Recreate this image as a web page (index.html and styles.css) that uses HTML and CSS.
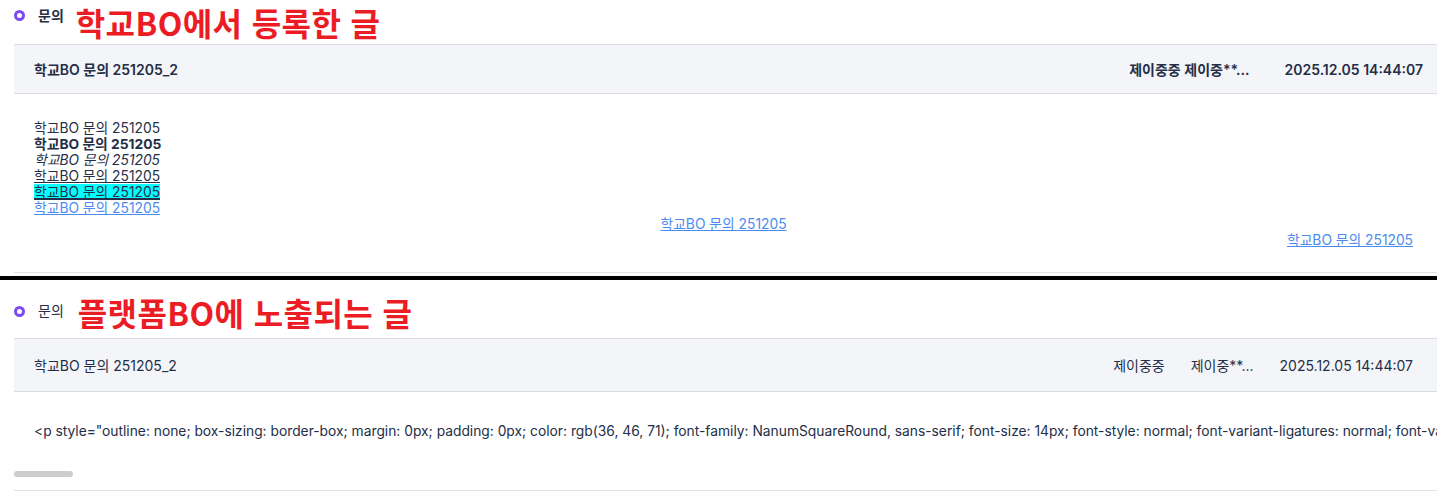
FILE: index.html
```html
<!DOCTYPE html>
<html lang="ko">
<head>
  <meta charset="UTF-8" />
  <meta name="viewport" content="width=device-width, initial-scale=1.0" />
  <title>문의</title>
  <link rel="stylesheet" href="styles.css">
</head>
<body>

<!-- 학교BO 쪽 -->
<section class="board board-school">
  <div class="board-title">
    <span class="dot"></span>
    <span class="label bold">문의</span>
    <span class="note">학교BO에서 등록한 글</span>
  </div>
  <div class="row-head head-school">
    <div class="subject">학교BO 문의 251205_2</div>
    <div class="writer">제이중중 제이중**...</div>
    <div class="date">2025.12.05 14:44:07</div>
  </div>
  <div class="row-body">
    <p>학교BO 문의 251205</p>
    <p><strong>학교BO 문의 251205</strong></p>
    <p><em>학교BO 문의 251205</em></p>
    <p><u>학교BO 문의 251205</u></p>
    <p><u class="mark">학교BO 문의 251205</u></p>
    <p><a href="#">학교BO 문의 251205</a></p>
    <p class="center"><a href="#">학교BO 문의 251205</a></p>
    <p class="right"><a href="#">학교BO 문의 251205</a></p>
  </div>
</section>

<div class="divider"></div>

<!-- 플랫폼BO 쪽 -->
<section class="board board-platform">
  <div class="board-title">
    <span class="dot"></span>
    <span class="label">문의</span>
    <span class="note">플랫폼BO에 노출되는 글</span>
  </div>
  <div class="row-head head-platform">
    <div class="subject">학교BO 문의 251205_2</div>
    <div class="school">제이중중</div>
    <div class="writer">제이중**...</div>
    <div class="date">2025.12.05 14:44:07</div>
  </div>
  <div class="row-body raw">
    <div class="raw-text">&lt;p style="outline: none; box-sizing: border-box; margin: 0px; padding: 0px; color: rgb(36, 46, 71); font-family: NanumSquareRound, sans-serif; font-size: 14px; font-style: normal; font-variant-ligatures: normal; font-variant-caps: normal; font-weight: 400; letter-spacing: normal;"&gt;학교BO 문의 251205&lt;/p&gt;</div>
    <div class="scroll"><span class="thumb"></span></div>
  </div>
</section>

</body>
</html>
```

FILE: styles.css
```css
body { margin: 0; font-family: Inter, "Noto Sans CJK KR", sans-serif; color: #242e47; background: #fff; overflow: hidden; }
p { margin: 0; }

.board { padding-left: 14px; }
.board-title { display: flex; align-items: flex-start; }
.dot { width: 5px; height: 5px; border: 3px solid #7b4cf5; border-radius: 50%; margin-top: 10px; flex: none; }
.label { font-size: 14px; line-height: 31px; margin-left: 13px; font-family: "Noto Sans CJK KR", sans-serif; }
.label.bold { font-weight: 700; }
.note { font-size: 32px; line-height: 44px; margin-left: 12px; font-weight: 700; color: #ec1c24;
        font-family: "Noto Sans CJK KR", sans-serif; letter-spacing: 0.4px; }

.board-platform .board-title { padding-top: 14px; margin-bottom: 8px; }
.board-platform .board-title .label,
.board-platform .board-title .note { line-height: 36px; }
.board-platform .board-title .dot { margin-top: 12px; }
.board-platform .board-title .label { margin-top: -2px; }
.board-platform .board-title .note { margin-left: 14px; }

.row-head { display: flex; align-items: center; background: #f4f5f9; border-top: 1px solid #dcdde3;
            border-bottom: 1px solid #dcdde3; font-size: 14px; padding-left: 20px; }
.row-head .subject { flex: 1; }
.head-school { height: 48px; font-weight: 600; padding-right: 14px; gap: 35px; }
.head-platform { height: 52px; padding-right: 24px; }
.head-platform .school { margin-right: 26px; }
.head-platform .writer { margin-right: 26px; }

.row-body { font-size: 13.8px; line-height: 16px; padding: 26px 24px 24px 20px; border-bottom: 1px solid #e3e3e6; }
.row-body a { color: #4b8bf0; }
.mark { background: #00ffff; text-decoration-thickness: 2px; }
.center { text-align: center; }
.right { text-align: right; }

.divider { height: 4px; background: #000; margin-top: 3px; }

.raw { padding: 31px 0 13px 0; }
.raw-text { white-space: nowrap; overflow: hidden; padding-left: 20px; }
.scroll { margin-top: 32px; height: 6px; }
.thumb { display: block; width: 59px; height: 6px; border-radius: 3px; background: #cdcdcd; }
```
